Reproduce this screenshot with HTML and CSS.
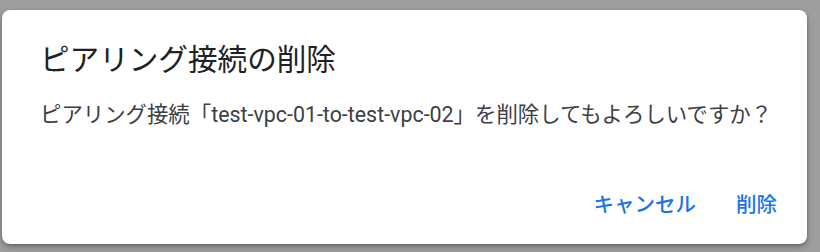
FILE: index.html
```html
<!DOCTYPE html>
<html lang="ja">
<head>
<meta charset="utf-8">
<link rel="stylesheet" href="styles.css">
</head>
<body>
<div class="dialog">
  <h2 class="title">ピアリング接続の削除</h2>
  <p class="content">ピアリング接続「<span class="name">test-vpc-01-to-test-vpc-02</span>」を削除してもよろしいですか？</p>
  <div class="actions">
    <button class="btn">キャンセル</button>
    <button class="btn">削除</button>
  </div>
</div>
</body>
</html>
```
FILE: styles.css
```css
html, body {
  margin: 0;
  padding: 0;
  background: #9e9e9e;
  width: 820px;
  height: 252px;
  overflow: hidden;
}
body {
  font-family: "Roboto", "Noto Sans CJK JP", sans-serif;
}
.dialog {
  box-sizing: border-box;
  margin: 10px 0 0 2px;
  width: 805px;
  height: 234px;
  background: #fff;
  border-radius: 8px;
  box-shadow: 0 3px 6px rgba(0,0,0,0.25), 0 1px 3px rgba(0,0,0,0.2);
  display: flex;
  flex-direction: column;
  padding: 30px 22px 21px 38px;
}
.title {
  margin: 0;
  font-size: 29.6px;
  font-weight: 400;
  line-height: 40px;
  color: #202124;
}
.content {
  margin: 19px 0 0 0;
  font-size: 21.4px;
  line-height: 32px;
  color: #3c4043;
}
.actions {
  margin-top: auto;
  display: flex;
  justify-content: flex-end;
  gap: 24px;
}
.btn {
  font-family: inherit;
  font-size: 20.5px;
  font-weight: 500;
  color: #1a73e8;
  background: none;
  border: none;
  padding: 0 8px;
  height: 36px;
  line-height: 36px;
  cursor: pointer;
}
```
